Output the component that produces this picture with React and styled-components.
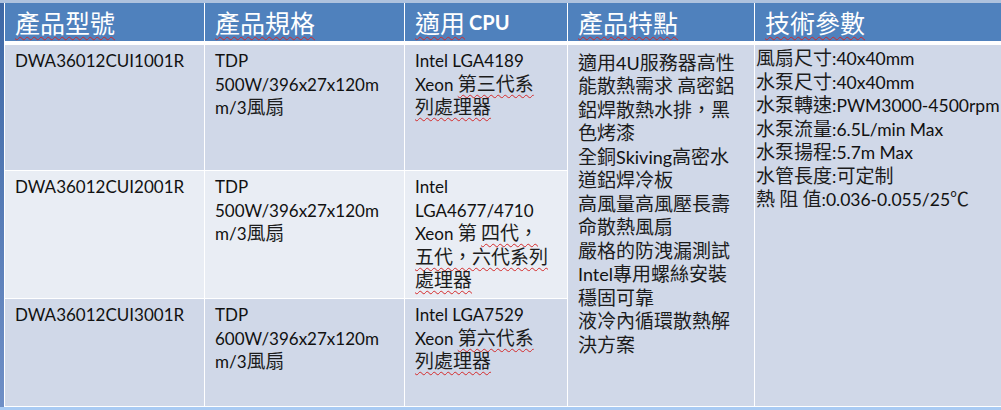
import styled, { createGlobalStyle } from "styled-components";

const GlobalStyle = createGlobalStyle`
  html, body {
    margin: 0;
    padding: 0;
    background: #ffffff;
  }
  body {
    font-family: "Lato", "Noto Sans CJK TC", sans-serif;
  }
`;

const Frame = styled.div`
  width: 1001px;
  height: 410px;
  box-sizing: border-box;
  border-top: 3px solid #aec2de;
  border-bottom: 3px solid #a9cbf3;
  padding-left: 4px;
  background: linear-gradient(#3d68a6, #6f8fc6);
  overflow: hidden;
`;

const Table = styled.div`
  display: grid;
  grid-template-columns: 199px 199px 162px 186px 1fr;
  grid-template-rows: 41px 125px 127px 107px;
  gap: 1px;
  padding-left: 1px;
  padding-bottom: 1px;
  background: #ffffff;
`;

const HeadCell = styled.div`
  height: 38px;
  margin-bottom: 3px;
  display: flex;
  align-items: center;
  padding-left: 10px;
  background: #4f81bd;
  color: #ffffff;
  font-family: "Noto Sans CJK TC", sans-serif;
  font-size: 25px;
  white-space: nowrap;
`;

const HeadLatin = styled.span`
  font-family: "Lato", sans-serif;
  font-weight: 700;
  font-size: 20px;
  margin-left: 4px;
`;

const Cell = styled.div`
  --latin: ${({ $latin }) => $latin || "17px"};
  background: ${({ $alt }) => ($alt ? "#e9edf4" : "#d0d8e8")};
  padding: ${({ $pad }) => $pad || "2px 10px 0"};
  grid-row: ${({ $span }) => ($span ? "2 / span 3" : "auto")};
  grid-column: ${({ $col }) => $col || "auto"};
  color: #1c1c1c;
  font-family: "Noto Sans CJK TC", sans-serif;
  font-size: 19px;
`;

const Line = styled.div`
  height: 23.5px;
  line-height: 23.5px;
  white-space: nowrap;
`;

const Latin = styled.span`
  font-family: "Lato", sans-serif;
  font-size: var(--latin);
  color: #111111;
`;

const Wavy = styled.span`
  text-decoration: underline wavy #d42a2a;
  text-decoration-thickness: 1px;
  text-underline-offset: 3px;
`;

// wraps every ASCII run of a string in <Latin>, leaving CJK text as is
const Mixed = ({ text }) =>
  text.split(/([\x21-\x7e]+)/).map((part, i) =>
    /^[\x21-\x7e]+$/.test(part) ? <Latin key={i}>{part}</Latin> : part
  );

const Lines = ({ items }) =>
  items.map((item, i) => (
    <Line key={i}>
      {typeof item === "string" ? <Mixed text={item} /> : item}
    </Line>
  ));

const rows = [
  {
    model: "DWA36012CUI1001R",
    spec: ["TDP", "500W/396x27x120m", "m/3風扇"],
    cpu: [
      "Intel LGA4189",
      <><Latin>Xeon</Latin> <Wavy>第三代系</Wavy></>,
      <Wavy>列處理器</Wavy>,
    ],
  },
  {
    model: "DWA36012CUI2001R",
    alt: true,
    spec: ["TDP", "500W/396x27x120m", "m/3風扇"],
    cpu: [
      "Intel",
      "LGA4677/4710",
      <><Latin>Xeon</Latin> 第 <Wavy>四代，</Wavy></>,
      <Wavy>五代，六代系列</Wavy>,
      <Wavy>處理器</Wavy>,
    ],
  },
  {
    model: "DWA36012CUI3001R",
    spec: ["TDP", "600W/396x27x120m", "m/3風扇"],
    cpu: [
      "Intel LGA7529",
      <><Latin>Xeon</Latin> <Wavy>第六代系</Wavy></>,
      <Wavy>列處理器</Wavy>,
    ],
  },
];

const features = [
  "適用4U服務器高性",
  "能散熱需求 高密鋁",
  "鋁焊散熱水排，黑",
  "色烤漆",
  "全銅Skiving高密水",
  "道鋁焊冷板",
  "高風量高風壓長壽",
  "命散熱風扇",
  "嚴格的防洩漏測試",
  "Intel專用螺絲安裝",
  "穩固可靠",
  "液冷內循環散熱解",
  "決方案",
];

const params = [
  "風扇尺寸:40x40mm",
  "水泵尺寸:40x40mm",
  "水泵轉速:PWM3000-4500rpm",
  "水泵流量:6.5L/min  Max",
  "水泵揚程:5.7m Max",
  "水管長度:可定制",
  "熱 阻 值:0.036-0.055/25℃",
];

export default function App() {
  return (
    <Frame>
      <GlobalStyle />
      <Table>
        <HeadCell><Wavy>產品型號</Wavy></HeadCell>
        <HeadCell><Wavy>產品規格</Wavy></HeadCell>
        <HeadCell>
          <Wavy>適用</Wavy>
          <HeadLatin>CPU</HeadLatin>
        </HeadCell>
        <HeadCell><Wavy>產品特點</Wavy></HeadCell>
        <HeadCell><Wavy>技術參數</Wavy></HeadCell>

        {rows.map((row, r) => [
          <Cell key={`m${r}`} $alt={row.alt} $col="1">
            <Lines items={[row.model]} />
          </Cell>,
          <Cell key={`s${r}`} $alt={row.alt} $col="2">
            <Lines items={row.spec} />
          </Cell>,
          <Cell key={`c${r}`} $alt={row.alt} $col="3">
            <Lines items={row.cpu} />
          </Cell>,
        ])}

        <Cell $span $col="4" $latin="18px" $pad="4.5px 10px 0">
          <Lines items={features} />
        </Cell>
        <Cell $span $col="5" $latin="17.5px" $pad="0 1px">
          <Lines items={params} />
        </Cell>
      </Table>
    </Frame>
  );
}
